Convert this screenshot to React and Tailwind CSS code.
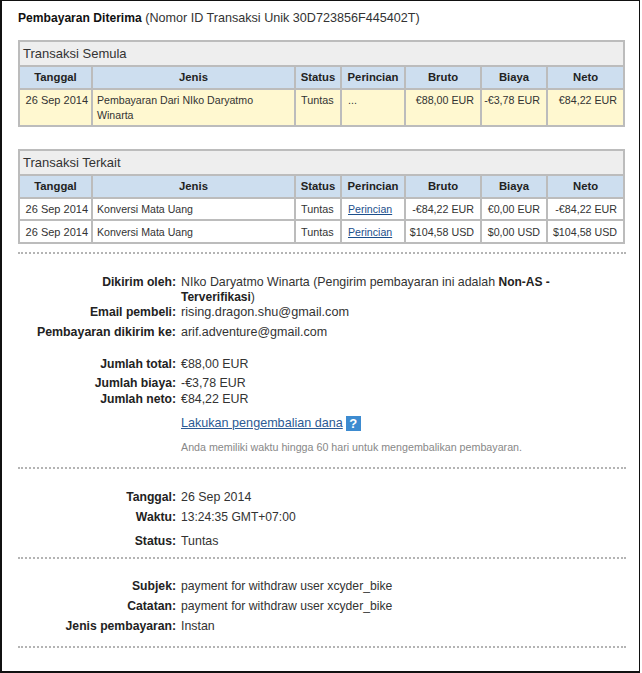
function Dots({ className = "" }) {
  return <div className={`h-0 border-t-2 border-dotted border-[#b4b4b4] ${className}`} />;
}
function Row({ label, children, className = "", valueSize = "text-[12.4px]", labelSize = "text-[12.2px]" }) {
  return (
    <div className={`flex leading-[15px] ${className}`}>
      <div className={`w-[158px] shrink-0 text-right font-bold text-[#222] ${labelSize}`}>{label}</div>
      <div className={`ml-[5px] flex-1 text-[#333] ${valueSize}`}>{children}</div>
    </div>
  );
}
const th = "border-2 border-[#bcbcbc] bg-[#cddeef] text-center font-bold text-[11.3px] text-[#222] h-[23px] p-0";
const td = "border-2 border-[#bcbcbc] text-[#333] align-top pb-[2px] leading-[15px]";
const amount = "text-[10.7px] text-right pl-0 pr-[6px] whitespace-nowrap";
function Table({ title, rows, yellow }) {
  const bg = yellow ? "bg-[#fff8d0]" : "bg-white";
  return (
    <table className="w-[605px] table-fixed border-collapse">
      <colgroup>
        <col className="w-[73px]" />
        <col className="w-[203px]" />
        <col className="w-[46px]" />
        <col className="w-[64px]" />
        <col className="w-[76px]" />
        <col className="w-[66px]" />
        <col className="w-[77px]" />
      </colgroup>
      <thead>
        <tr>
          <th colSpan={7} className="border-2 border-[#bcbcbc] bg-[#eeeeee] h-[25px] p-0 pl-[3px] text-left text-[13px] font-normal text-[#333]">{title}</th>
        </tr>
        <tr>
          {["Tanggal", "Jenis", "Status", "Perincian", "Bruto", "Biaya", "Neto"].map((h) => (
            <th key={h} className={th}>{h}</th>
          ))}
        </tr>
      </thead>
      <tbody>
        {rows.map((r, i) => {
          const pt = i === 1 ? "pt-[4px]" : "pt-[3px]";
          return (
            <tr key={i}>
              <td className={`${td} ${bg} ${pt} text-[11px] text-right pl-0 pr-[3px] whitespace-nowrap`}>{r[0]}</td>
              <td className={`${td} ${bg} ${pt} text-[10.6px] pl-[4px] pr-[4px]`}><div className="max-w-[170px]">{r[1]}</div></td>
              <td className={`${td} ${bg} ${pt} text-[10.8px] pl-[5px]`}>{r[2]}</td>
              <td className={`${td} ${bg} ${pt} text-[10.6px] pl-[6px]`}>
                {r[3] === "..." ? "..." : <a className="text-[#1c4f8c] underline">{r[3]}</a>}
              </td>
              <td className={`${td} ${bg} ${pt} ${amount}`}>{r[4]}</td>
              <td className={`${td} ${bg} ${pt} ${amount}`}>{r[5]}</td>
              <td className={`${td} ${bg} ${pt} ${amount}`}>{r[6]}</td>
            </tr>
          );
        })}
      </tbody>
    </table>
  );
}
export default function App() {
  return (
    <div className="w-[642px] h-[673px] bg-white font-['Liberation_Sans',Arial,sans-serif] overflow-hidden">
      <div className="w-[640px] h-[673px] border-t-[1px] border-l-[2px] border-r-[1px] border-b-[2px] border-[#111] pl-[16px] pt-[10px]">
        <div className="text-[12.6px] leading-[14px] text-[#333]">
          <b className="text-[#111] text-[12.1px]">Pembayaran Diterima</b> (Nomor ID Transaksi Unik 30D723856F445402T)
        </div>
        <div className="mt-[15px]">
          <Table
            title="Transaksi Semula"
            yellow
            rows={[["26 Sep 2014", "Pembayaran Dari NIko Daryatmo Winarta", "Tuntas", "...", "€88,00 EUR", "-€3,78 EUR", "€84,22 EUR"]]}
          />
        </div>
        <div className="mt-[22px]">
          <Table
            title="Transaksi Terkait"
            rows={[
              ["26 Sep 2014", "Konversi Mata Uang", "Tuntas", "Perincian", "-€84,22 EUR", "€0,00 EUR", "-€84,22 EUR"],
              ["26 Sep 2014", "Konversi Mata Uang", "Tuntas", "Perincian", "$104,58 USD", "$0,00 USD", "$104,58 USD"],
            ]}
          />
        </div>
        <Dots className="w-[608px] mt-[8px]" />
        <Row label="Dikirim oleh:" className="mt-[21px]">
          <div>NIko Daryatmo Winarta (Pengirim pembayaran ini adalah <b className="text-[#222] text-[12px]">Non-AS -</b></div>
          <div><b className="text-[#222] text-[12px]">Terverifikasi</b>)</div>
        </Row>
        <Row label="Email pembeli:" valueSize="text-[12.7px]">rising.dragon.shu@gmail.com</Row>
        <Row label="Pembayaran dikirim ke:" className="mt-[5px]" valueSize="text-[12.5px]" labelSize="text-[12.4px]">arif.adventure@gmail.com</Row>
        <Row label="Jumlah total:" className="mt-[17px]">€88,00 EUR</Row>
        <Row label="Jumlah biaya:" className="mt-[4px]">-€3,78 EUR</Row>
        <Row label="Jumlah neto:" className="mt-[1px]">€84,22 EUR</Row>
        <div className="ml-[163px] mt-[8px] flex items-center h-[17px] text-[12.6px]">
          <a className="text-[#2b5a94] underline">Lakukan pengembalian dana</a>
          <span className="ml-[3px] w-[15px] h-[15px] bg-[#3d8bd0] text-white font-bold text-[13px] leading-[15px] text-center">?</span>
        </div>
        <div className="ml-[163px] mt-[9px] text-[10.7px] leading-[13px] text-[#888]">Anda memiliki waktu hingga 60 hari untuk mengembalikan pembayaran.</div>
        <Dots className="w-[608px] mt-[13px]" />
        <Row label="Tanggal:" className="mt-[21px]">26 Sep 2014</Row>
        <Row label="Waktu:" className="mt-[5px]" valueSize="text-[12.1px]">13:24:35 GMT+07:00</Row>
        <Row label="Status:" className="mt-[9px]">Tuntas</Row>
        <Dots className="w-[608px] mt-[8px]" />
        <Row label="Subjek:" className="mt-[20px]" valueSize="text-[12.2px]">payment for withdraw user xcyder_bike</Row>
        <Row label="Catatan:" className="mt-[5px]" valueSize="text-[12.2px]">payment for withdraw user xcyder_bike</Row>
        <Row label="Jenis pembayaran:" className="mt-[5px]">Instan</Row>
        <Dots className="w-[608px] mt-[12px]" />
      </div>
    </div>
  );
}
